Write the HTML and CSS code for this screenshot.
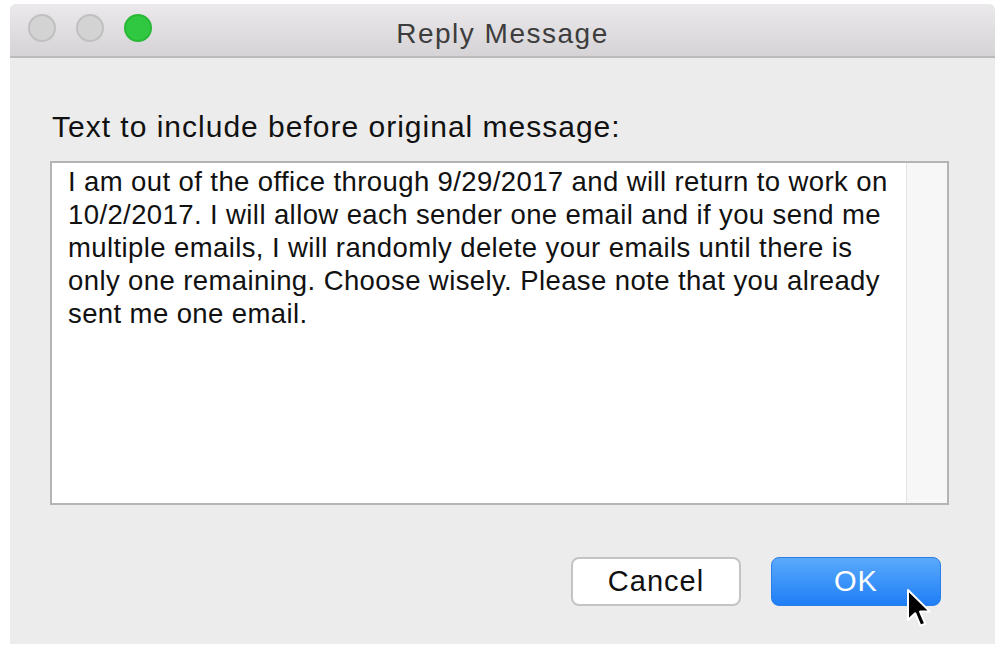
FILE: index.html
```html
<!DOCTYPE html>
<html lang="en">
<head>
    <meta charset="UTF-8">
    <title>Reply Message</title>
    <link rel="stylesheet" href="styles.css">
</head>
<body>

    <div class="window">
        <div class="titlebar">
            <div class="lights">
                <span class="light"></span>
                <span class="light"></span>
                <span class="light green"></span>
            </div>
            <div class="title">Reply Message</div>
            <div></div>
        </div>

        <div class="content">
            <label class="prompt" for="replyText">Text to include before original message:</label>
            <div class="text-box">
                <div id="replyText" class="text-body">I am out of the office through 9/29/2017 and will return to work on 10/2/2017. I will allow each sender one email and if you send me multiple emails, I will randomly delete your emails until there is only one remaining. Choose wisely. Please note that you already sent me one email.</div>
                <div class="scroll-track"></div>
            </div>

            <div class="buttons">
                <button class="btn btn-cancel">Cancel</button>
                <button class="btn btn-ok">OK</button>
            </div>
        </div>

        <!-- mouse pointer over the OK button -->
        <svg class="pointer" width="26" height="42" viewBox="0 0 13 21">
            <path d="M1 1 L1 16 L4.6 12.6 L7.2 18.8 L9.6 17.8 L7 11.8 L12 11.8 Z" fill="#000" stroke="#fff" stroke-width="1" stroke-linejoin="round"/>
        </svg>
    </div>

</body>
</html>
```

FILE: styles.css
```css
body {
    margin: 0;
    background-color: #fff;
    font-family: "Liberation Sans", Arial, sans-serif;
    width: 1000px;
    height: 660px;
    overflow: hidden;
}

.window {
    position: relative;
    margin: 4px 5px 0 10px;
    height: 640px;
    background-color: #ececec;
    border-radius: 6px 6px 0 0;
    display: flex;
    flex-direction: column;
}

.titlebar {
    height: 52px;
    display: grid;
    grid-template-columns: 1fr auto 1fr;
    align-items: center;
    background: linear-gradient(#ebe9eb, #d5d3d5);
    border-bottom: 2px solid #bdbbbd;
    border-radius: 6px 6px 0 0;
    padding: 0 18px;
}

.lights {
    display: flex;
    gap: 20px;
    margin-top: -4px;
}

.light {
    width: 28px;
    height: 28px;
    border-radius: 50%;
    background-color: #d3d3d3;
    border: 2px solid #c0c0c0;
    box-sizing: border-box;
}

.light.green {
    background-color: #2fc840;
    border-color: #29b838;
}

.title {
    font-size: 28px;
    letter-spacing: 1.5px;
    color: #3d3d3d;
    padding-top: 8px;
}

.content {
    flex: 1;
    padding: 52px 46px 0 44px;
    display: flex;
    flex-direction: column;
}

.prompt {
    font-size: 30px;
    letter-spacing: 1px;
    color: #111;
    display: block;
    margin: 0 0 17px -2px;
}

.text-box {
    height: 340px;
    background-color: #fff;
    border: 2px solid #b4b4b4;
    margin-left: -4px;
    display: flex;
}

.text-body {
    flex: 1;
    padding: 2px 6px 0 16px;
    font-size: 27.5px;
    letter-spacing: 0.4px;
    line-height: 33px;
    color: #111;
}

.scroll-track {
    width: 40px;
    background-color: #f7f7f7;
    border-left: 1px solid #e4e4e4;
}

.buttons {
    display: flex;
    justify-content: flex-end;
    gap: 30px;
    margin-top: 52px;
    padding-right: 8px;
}

.btn {
    width: 170px;
    height: 49px;
    border-radius: 8px;
    font-family: "Liberation Sans", Arial, sans-serif;
    font-size: 29px;
    letter-spacing: 1px;
    cursor: pointer;
}

.btn-cancel {
    background-color: #fff;
    border: 2px solid #c4c4c4;
    color: #111;
}

.btn-ok {
    background: linear-gradient(#5aaafc, #1f7ef6);
    border: 1px solid #2a7ee8;
    color: #fff;
}

.pointer {
    position: absolute;
    left: 896px;
    top: 584px;
}
```
